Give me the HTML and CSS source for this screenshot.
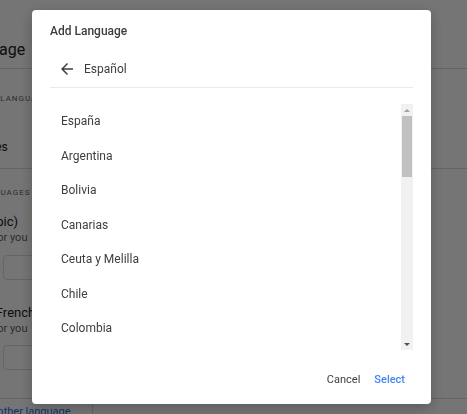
FILE: index.html
```html
<!DOCTYPE html>
<html lang="en">
<head>
    <meta charset="UTF-8">
    <meta name="viewport" content="width=device-width, initial-scale=1.0">
    <title>Language</title>
    <link rel="stylesheet" href="styles.css">
</head>
<body>
    <div class="page">
        <div class="page-title">Language</div>
        <div class="section-label">Display language</div>
        <div class="row-text">Languages</div>
        <div class="divider"></div>
        <div class="section-label label-second">My languages</div>
        <div class="lang-name lang-first">Hindi (Topic)</div>
        <div class="lang-note">Translated for you</div>
        <div class="lang-box"></div>
        <div class="lang-name lang-later">Français (French)</div>
        <div class="lang-note">Translated for you</div>
        <div class="lang-box box-later"></div>
        <div class="page-footer">
            <div class="footer-cell">Add another language</div>
        </div>
    </div>

    <div class="scrim">
        <div class="dialog">
            <div class="dialog-title">Add Language</div>
            <div class="dialog-head">
                <svg class="back-icon" width="18" height="18" viewBox="0 0 24 24">
                    <path d="M20 11H7.83l5.59-5.59L12 4l-8 8 8 8 1.41-1.41L7.83 13H20v-2z" fill="#3c4043"/>
                </svg>
                <span>Español</span>
            </div>
            <div class="picker">
                <ul class="region-list">
                    <li>España</li>
                    <li>Argentina</li>
                    <li>Bolivia</li>
                    <li>Canarias</li>
                    <li>Ceuta y Melilla</li>
                    <li>Chile</li>
                    <li>Colombia</li>
                    <li>Costa Rica</li>
                    <li>Cuba</li>
                    <li>Ecuador</li>
                    <li>El Salvador</li>
                    <li>Estados Unidos</li>
                    <li>Filipinas</li>
                    <li>Guatemala</li>
                    <li>Guinea Ecuatorial</li>
                    <li>Honduras</li>
                    <li>Latinoamérica</li>
                    <li>México</li>
                    <li>Nicaragua</li>
                    <li>Panamá</li>
                    <li>Paraguay</li>
                    <li>Perú</li>
                    <li>Puerto Rico</li>
                    <li>República Dominicana</li>
                    <li>Uruguay</li>
                    <li>Venezuela</li>
                </ul>
                <div class="scrollbar">
                    <span class="sb-arrow sb-up"></span>
                    <span class="sb-thumb"></span>
                    <span class="sb-track"></span>
                    <span class="sb-arrow sb-down"></span>
                </div>
            </div>
            <div class="dialog-actions">
                <button class="btn btn-cancel">Cancel</button>
                <button class="btn btn-primary">Select</button>
            </div>
        </div>
    </div>
</body>
</html>
```

FILE: styles.css
```css
body {
    margin: 0;
    font-family: Roboto, "Noto Sans", sans-serif;
    background: white;
    overflow: hidden;
    height: 414px;
}

/* page behind the dialog */
.page {
    margin-left: -61px;
    color: #202124;
}

.page-title {
    padding: 40px 0 8px 16px;
    line-height: 20px;
    font-size: 16px;
    border-bottom: 1px solid #dadce0;
}

.section-label {
    margin-top: 24px;
    padding-left: 20px;
    font-size: 8px;
    line-height: 12px;
    letter-spacing: 1px;
    text-transform: uppercase;
    color: #5f6368;
}

.label-second {
    margin-top: 18px;
}

.row-text {
    margin-top: 34px;
    padding-left: 10px;
    font-size: 12px;
    line-height: 16px;
}

.divider {
    margin-top: 13px;
    border-top: 1px solid #dadce0;
}

.lang-name {
    margin-top: 15px;
    font-size: 13px;
    line-height: 16px;
}

.lang-first {
    padding-left: 5px;
}

.lang-later {
    margin-top: 25px;
}

.lang-note {
    margin-top: 1px;
    font-size: 11px;
    line-height: 14px;
    color: #5f6368;
}

.lang-box {
    margin-top: 10px;
    margin-left: 64px;
    width: 200px;
    height: 23px;
    border: 1px solid #dadce0;
    border-radius: 4px;
}

.box-later {
    margin-top: 9px;
}

.page-footer {
    margin-top: 28px;
    border-top: 1px solid #dadce0;
    display: flex;
}

.footer-cell {
    width: 129px;
    height: 15px;
    padding: 5px 0 0 24px;
    border-right: 1px solid #dadce0;
    font-size: 11px;
    line-height: 16px;
    white-space: nowrap;
    color: #1a73e8;
}

/* dialog */
.scrim {
    position: fixed;
    inset: 0;
    background: rgba(0, 0, 0, 0.54);
    display: flex;
    align-items: flex-start;
    padding: 10px 0 0 32px;
}

.dialog {
    width: 363px;
    height: 394px;
    padding: 0 18px;
    background: white;
    border-radius: 4px;
    box-shadow: 0 4px 14px rgba(0, 0, 0, 0.25);
    display: flex;
    flex-direction: column;
}

.dialog-title {
    padding-top: 13px;
    font-size: 12px;
    line-height: 16px;
    font-weight: 500;
    color: #3c4043;
}

.dialog-head {
    margin-top: 12px;
    height: 36px;
    padding-left: 8px;
    display: flex;
    align-items: center;
    gap: 8px;
    border-bottom: 1px solid #e8eaed;
    font-size: 12px;
    color: #3c4043;
}

.picker {
    margin-top: 16px;
    height: 246px;
    display: flex;
}

.region-list {
    flex: 1;
    margin: 0;
    padding: 0;
    list-style: none;
    overflow: hidden;
}

.region-list li {
    height: 34.5px;
    line-height: 34.5px;
    padding-left: 11px;
    font-size: 12px;
    color: #3c4043;
}

.scrollbar {
    width: 12px;
    background: #f1f1f1;
    display: flex;
    flex-direction: column;
}

.sb-arrow {
    height: 12px;
    display: flex;
    align-items: center;
    justify-content: center;
}

.sb-arrow::before {
    content: "";
    border-left: 3px solid transparent;
    border-right: 3px solid transparent;
}

.sb-up::before {
    border-bottom: 3px solid #a3a3a3;
}

.sb-down::before {
    border-top: 3px solid #505050;
}

.sb-thumb {
    height: 61px;
    margin: 0 1px;
    background: #c1c1c1;
}

.sb-track {
    flex: 1;
}

.dialog-actions {
    margin-top: 14px;
    height: 30px;
    display: flex;
    justify-content: flex-end;
    align-items: center;
}

.btn {
    padding: 0 8px;
    height: 30px;
    border: none;
    background: none;
    font-family: Roboto, "Noto Sans", sans-serif;
    font-size: 11px;
    color: #3c4043;
}

.btn-cancel {
    padding: 0 6px 0 7px;
}

.btn-primary {
    color: #4285f4;
    font-weight: 500;
}
```
